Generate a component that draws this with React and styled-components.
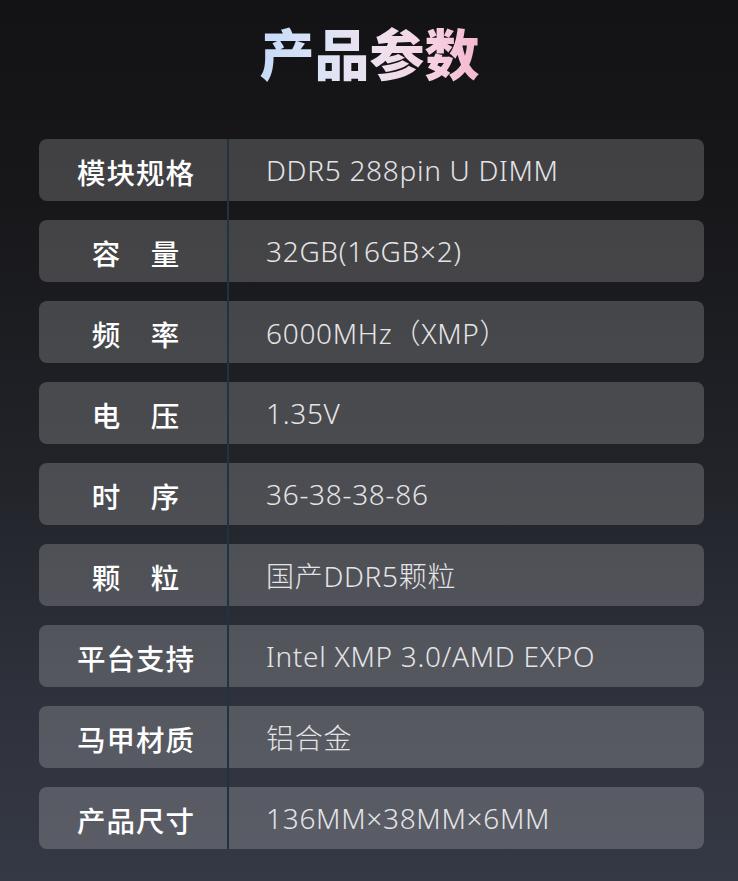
import React from "react";
import styled, { createGlobalStyle } from "styled-components";

const specs = [
	{ label: "模块规格", value: "DDR5 288pin U DIMM" },
	{ label: "容　量", value: "32GB(16GB×2)" },
	{ label: "频　率", value: "6000MHz（XMP）" },
	{ label: "电　压", value: "1.35V" },
	{ label: "时　序", value: "36-38-38-86" },
	{ label: "颗　粒", value: "国产DDR5颗粒" },
	{ label: "平台支持", value: "Intel XMP 3.0/AMD EXPO" },
	{ label: "马甲材质", value: "铝合金" },
	{ label: "产品尺寸", value: "136MM×38MM×6MM" },
];

const GlobalStyle = createGlobalStyle`
	html, body {
		margin: 0;
		padding: 0;
		background: #141416;
	}
	* {
		box-sizing: border-box;
	}
`;

function App() {
	return (
		<>
			<GlobalStyle />
			<StyledPage>
				<Title>产品参数</Title>
				<SpecList>
					{specs.map((item, idx) => (
						<SpecRow key={idx}>
							<Label>{item.label}</Label>
							<Value>{item.value}</Value>
						</SpecRow>
					))}
				</SpecList>
			</StyledPage>
		</>
	);
}

const StyledPage = styled.div`
	width: 738px;
	height: 881px;
	overflow: hidden;
	padding: 16px 34px 0 39px;
	background: linear-gradient(180deg, #131315 0%, #17171a 22%, #22242a 55%, #2f323c 80%, #353945 100%);
	font-family: "Noto Sans CJK SC", "Noto Sans", sans-serif;
`;

const Title = styled.h1`
	margin: 0 0 0 -4px;
	text-align: center;
	font-size: 55px;
	line-height: 70px;
	font-weight: 900;
	letter-spacing: 0;
	background: linear-gradient(90deg, #c6dbf8 34%, #dde3f6 43%, #efe0ee 52%, #f6cfe0 60%, #f3b1cc 68%);
	-webkit-background-clip: text;
	background-clip: text;
	color: transparent;
`;

const SpecList = styled.ul`
	position: relative;
	list-style: none;
	margin: 53px 0 0;
	padding: 0;
	display: flex;
	flex-direction: column;
	gap: 19px;
	&::before {
		content: "";
		position: absolute;
		top: 0;
		bottom: 0;
		left: 188px;
		width: 1.5px;
		background: #1d3540;
		z-index: 1;
	}
`;

const SpecRow = styled.li`
	display: flex;
	align-items: center;
	height: 62px;
	border-radius: 8px;
	background: rgba(255, 255, 255, 0.19);
`;

const Label = styled.div`
	width: 189px;
	flex-shrink: 0;
	text-align: center;
	color: #ffffff;
	font-size: 28.5px;
	font-weight: 500;
	letter-spacing: 1px;
	padding: 2px 0 0 5px;
`;

const Value = styled.div`
	padding-left: 38px;
	color: #e4e4e6;
	font-family: "Noto Sans", "Noto Sans CJK SC", sans-serif;
	font-size: 28px;
	font-weight: 300;
	letter-spacing: 0.7px;
`;

export default App;
